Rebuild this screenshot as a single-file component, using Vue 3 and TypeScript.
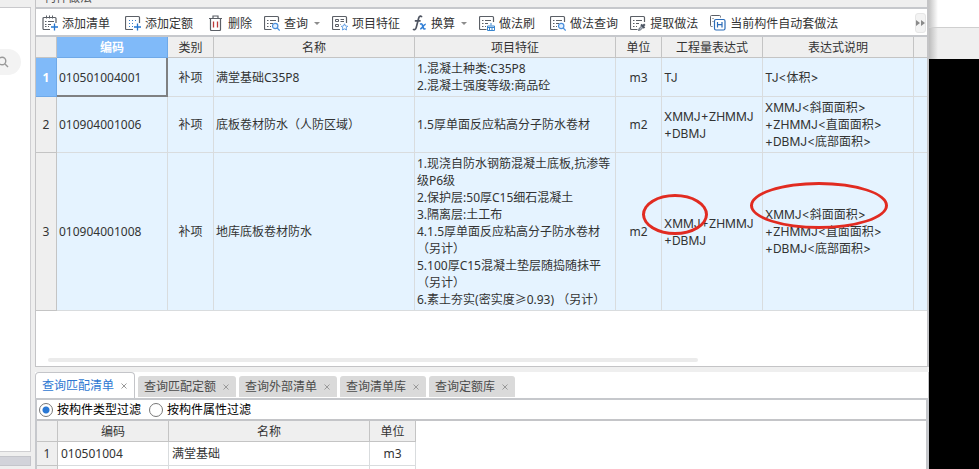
<script setup lang="ts">
import { ref } from 'vue'

interface Tool {
  icon: string
  label: string
  menu?: boolean
  wide?: boolean
}
interface Item {
  code: string
  kind: string
  name: string
  feature: string
  unit: string
  expr: string
  desc: string
  marked?: boolean
}

const tools: Tool[] = [
  { icon: 'addList', label: '添加清单', wide: true },
  { icon: 'addQuota', label: '添加定额', wide: true },
  { icon: 'trash', label: '删除' },
  { icon: 'query', label: '查询', menu: true },
  { icon: 'feature', label: '项目特征' },
  { icon: 'fx', label: '换算', menu: true },
  { icon: 'brush', label: '做法刷', wide: true },
  { icon: 'query', label: '做法查询' },
  { icon: 'pick', label: '提取做法' },
  { icon: 'auto', label: '当前构件自动套做法' },
]

const items: Item[] = [
  {
    code: '010501004001',
    kind: '补项',
    name: '满堂基础C35P8',
    feature: '1.混凝土种类:C35P8\n2.混凝土强度等级:商品砼',
    unit: 'm3',
    expr: 'TJ',
    desc: 'TJ<体积>',
  },
  {
    code: '010904001006',
    kind: '补项',
    name: '底板卷材防水（人防区域）',
    feature: '1.5厚单面反应粘高分子防水卷材',
    unit: 'm2',
    expr: 'XMMJ+ZHMMJ\n+DBMJ',
    desc: 'XMMJ<斜面面积>\n+ZHMMJ<直面面积>\n+DBMJ<底部面积>',
  },
  {
    code: '010904001008',
    kind: '补项',
    name: '地库底板卷材防水',
    feature:
      '1.现浇自防水钢筋混凝土底板,抗渗等\n级P6级\n2.保护层:50厚C15细石混凝土\n3.隔离层:土工布\n4.1.5厚单面反应粘高分子防水卷材\n（另计）\n5.100厚C15混凝土垫层随捣随抹平\n（另计）\n6.素土夯实(密实度≥0.93) （另计）',
    unit: 'm2',
    expr: 'XMMJ+ZHMMJ\n+DBMJ',
    desc: 'XMMJ<斜面面积>\n+ZHMMJ<直面面积>\n+DBMJ<底部面积>',
    marked: true,
  },
]

const tabs = ['查询匹配清单', '查询匹配定额', '查询外部清单', '查询清单库', '查询定额库']
const activeTab = ref(0)
const selected = ref(0)
const filter = ref('type')
</script>

<template>
  <div class="app">
    <aside class="side">
      <div class="side-head"></div>
      <div class="side-body">
        <button class="search" aria-label="搜索">
          <svg width="12" height="12" viewBox="0 0 12 12" fill="none" stroke="#999" stroke-width="1.4">
            <circle cx="5" cy="5" r="3.8" />
            <path d="M8 8l3 3" />
          </svg>
        </button>
      </div>
      <div class="side-bar"></div>
    </aside>

    <main class="main">
      <section class="upper">
        <header class="title">构件做法</header>
        <div class="toolbar">
          <button v-for="t in tools" :key="t.label" class="tool" :class="{ wide: t.wide }">
            <svg v-if="t.icon === 'fx'" width="15" height="16" viewBox="0 0 15 16" fill="none">
              <path d="M9.8 2.2C9.3 .6 7.400 .8 6.700 3L4.200 12.600C3.700 14.500 2.200 15.300 1 14.200M2.800 5.800H8.600" stroke="#4d5360" stroke-width="1.700" />
              <path d="M8 9.300C9.600 8 10.300 9.300 10.900 11.500S12 14.800 13.600 13.500M13.800 9.200C11.600 9 10.600 13.600 8.200 14" stroke="#3380d6" stroke-width="1.600" />
            </svg>
            <svg v-else width="16" height="16" viewBox="0 0 16 16" fill="none" stroke="#5b5f66">
              <template v-if="t.icon === 'addList'">
                <path d="M8 14.500H2a1 1 0 0 1-1-1V3.500a1 1 0 0 1 1-1h11a1 1 0 0 1 1 1V8" stroke-width="1.200" />
                <path d="M4.500 .5v3M7.500 .5v3M10.500 .5v3" />
                <path d="M3 6.500h1.500M6 6.500h6M3 9.500h1.500M6 9.500h3M3 11.500h1.500M6 11.500h1" />
                <path d="M12.500 8.500v7M9 12h7" stroke="#2475cf" stroke-width="1.300" />
              </template>
              <template v-else-if="t.icon === 'addQuota'">
                <path d="M8 14.500H1.500a1 1 0 0 1-1-1v-11a1 1 0 0 1 1-1h12a1 1 0 0 1 1 1V8" stroke-width="1.200" />
                <path d="M4 5.500h9M4 8.500h6M4 11.500h4" stroke="#3b7fc9" stroke-dasharray="1 2" />
                <path d="M12.500 8.500v7M9 12h7" stroke="#2475cf" stroke-width="1.300" />
              </template>
              <template v-else-if="t.icon === 'trash'">
                <path d="M1 3.500h13M5 3V1h5v2M2.500 4v10.500a1 1 0 0 0 1 1h8a1 1 0 0 0 1-1V4" stroke-width="1.200" />
                <path d="M5.500 6.500v6M9.500 6.500v6" stroke="#bd3a3a" stroke-width="1.300" />
              </template>
              <template v-else-if="t.icon === 'auto'">
                <path d="M2.500 11.500H1.500a1 1 0 0 1-1-1V1.500a1 1 0 0 1 1-1h8a1 1 0 0 1 1 1v1M2.500 3.500h1M2.500 6.500h1" />
                <rect x="4.500" y="4.500" width="10.500" height="10.500" rx="1.500" stroke="#2b6cb8" stroke-width="1.200" />
                <path d="M7.500 7v5.500M12 7v5.500M7.500 9.700H12" stroke="#2b6cb8" stroke-width="1.200" />
              </template>
              <template v-else-if="t.icon === 'feature'">
                <path d="M8 14.500H1.500a1 1 0 0 1-1-1v-11a1 1 0 0 1 1-1h12a1 1 0 0 1 1 1V8" stroke-width="1.200" />
                <path d="M3.500 4.500h3v2h-3zM3.500 9.500h3v2h-3zM8.500 4.500H12M8.500 6.500H12M8.500 9.500H9" />
                <path d="M12.500 8.800l1 2.200 2.200.3-1.600 1.500.4 2.200-2-1.100-2 1.100.4-2.200-1.600-1.500 2.200-.3z" stroke="#4f93e0" stroke-width=".9" />
              </template>
              <template v-else>
                <path d="M7.500 14.500H1.500a1 1 0 0 1-1-1v-11a1 1 0 0 1 1-1h12a1 1 0 0 1 1 1V7" stroke-width="1.200" />
                <path d="M3 5.500h1.500M6 5.500h6M3 8.500h1.500M6 8.500h3M3 11.500h1.500M6 11.500h1" />
                <g v-if="t.icon === 'query'" stroke="#4a90dd" stroke-width="1.200">
                  <circle cx="11.200" cy="11" r="2.700" fill="#e3f0ff" />
                  <path d="M13.200 13l2.500 2.500" />
                </g>
                <g v-else-if="t.icon === 'brush'" stroke="#3a86cf">
                  <path d="M12 8v2.500M8.500 11h7v4.500h-7zM8.500 12.500h7M10.500 13v2.500M13 13v2.500" />
                </g>
                <g v-else stroke="#4c5563">
                  <path d="M8.500 15.500l.7-2.200 2.800-2.800 1.500 1.500-2.800 2.800z" fill="#aab2bd" stroke-width=".8" />
                  <path d="M11 9.500l3.500 3.500M12.500 11.500l2.300-2.300" stroke-width="2" />
                </g>
              </template>
            </svg>
            <span>{{ t.label }}</span>
            <i v-if="t.menu" class="caret"></i>
          </button>
          <button class="more" aria-label="更多">
            <svg width="9" height="6" viewBox="0 0 9 6" fill="#8a8a8a"><path d="M0 0l4 3-4 3zM5 0l4 3-4 3z" /></svg>
          </button>
        </div>

        <table class="grid top">
          <colgroup>
            <col class="c-num" /><col class="c-code" /><col class="c-small" /><col class="c-name" />
            <col class="c-name" /><col class="c-small" /><col class="c-expr" /><col class="c-desc" /><col />
          </colgroup>
          <thead>
            <tr>
              <th></th>
              <th class="on">编码</th>
              <th>类别</th>
              <th>名称</th>
              <th>项目特征</th>
              <th>单位</th>
              <th>工程量表达式</th>
              <th>表达式说明</th>
              <th></th>
            </tr>
          </thead>
          <tbody>
            <tr v-for="(r, i) in items" :key="r.code" @click="selected = i">
              <th scope="row" :class="{ on: i === selected }">{{ i + 1 }}</th>
              <td :class="{ cursor: i === selected }">{{ r.code }}</td>
              <td class="mid">{{ r.kind }}</td>
              <td>{{ r.name }}</td>
              <td>{{ r.feature }}</td>
              <td class="mid">{{ r.unit }}</td>
              <td class="formula">{{ r.expr }}<span v-if="r.marked" class="ring ring-expr"></span></td>
              <td class="formula">{{ r.desc }}<span v-if="r.marked" class="ring ring-desc"></span></td>
              <td></td>
            </tr>
          </tbody>
        </table>
        <div class="scroll"><div class="thumb"></div></div>
      </section>

      <nav class="tabs">
        <div v-for="(t, i) in tabs" :key="t" class="tab" :class="{ active: i === activeTab }">
          <button class="tab-name" @click="activeTab = i">{{ t }}</button>
          <button class="close" :aria-label="'关闭' + t">
            <svg width="6" height="6" viewBox="0 0 6 6" stroke="#999"><path d="M.5 .5l5 5M5.500 .5l-5 5" /></svg>
          </button>
        </div>
      </nav>

      <section class="lower">
        <div class="filters">
          <label><input v-model="filter" type="radio" name="filter" value="type" />按构件类型过滤</label>
          <label><input v-model="filter" type="radio" name="filter" value="attr" />按构件属性过滤</label>
        </div>
        <table class="grid bottom">
          <colgroup>
            <col class="c-num" /><col class="c-code" /><col class="c-name" /><col class="c-small" />
          </colgroup>
          <thead>
            <tr><th></th><th>编码</th><th>名称</th><th>单位</th></tr>
          </thead>
          <tbody>
            <tr><th scope="row">1</th><td>010501004</td><td>满堂基础</td><td class="mid">m3</td></tr>
            <tr><th></th><td></td><td></td><td></td></tr>
          </tbody>
        </table>
      </section>
    </main>

    <aside class="outside"><div class="outside-head"></div><div class="outside-body"></div></aside>
  </div>
</template>

<style>
body {
  margin: 0;
  background: #000;
}
</style>

<style scoped>
.app {
  display: grid;
  grid-template-columns: 31px minmax(0, 1fr) 50px;
  column-gap: 0;
  height: 100vh;
  overflow: hidden;
  background: #efefef;
  color: #333;
  font: 12px/17px "Noto Sans", "Noto Sans CJK SC", sans-serif;
}
.app * {
  box-sizing: border-box;
}
button {
  margin: 0;
  padding: 0;
  border: 0;
  background: none;
  color: inherit;
  font: inherit;
}
svg {
  display: block;
  flex: none;
}

/* left strip */
.side {
  display: flex;
  flex-direction: column;
  min-height: 0;
}
.side-head {
  height: 8px;
  border-bottom: 1px solid #c9c9cc;
}
.side-body {
  flex: 1;
  padding-top: 41px;
  background: #fff;
  border: solid #cfcfd2;
  border-width: 0 1px 1px 0;
}
.search {
  display: flex;
  align-items: center;
  width: 21px;
  height: 26px;
  border-radius: 0 13px 13px 0;
  background: #f3f3f3;
}
.search svg {
  margin-left: -3px;
}
.side-bar {
  height: 10px;
  margin: 4px 0 3px;
  background: #d2d3da;
  border: solid #c4c5cb;
  border-width: 1px 1px 1px 0;
}

/* main window */
.main {
  display: flex;
  flex-direction: column;
  min-width: 0;
  min-height: 0;
  padding-left: 4px;
}
.upper {
  border: solid #c4c4c6;
  border-width: 0 2px 1px 1px;
  background: #fff;
}
.title {
  display: flex;
  align-items: flex-end;
  height: 9px;
  padding: 0 8px 1px;
  overflow: hidden;
  background: #efefef;
  border-bottom: 2px solid #c6c8cc;
  color: #555;
}
.toolbar {
  display: flex;
  align-items: center;
  gap: 12px;
  height: 28px;
  padding: 2px 0 0 6px;
  border-bottom: 2px solid #c6c8cc;
}
.tool {
  display: flex;
  align-items: center;
  gap: 4px;
  flex: none;
  white-space: nowrap;
}
.wide {
  margin-right: 3px;
}
.caret {
  margin-left: 2px;
  border: solid transparent;
  border-width: 3px 3px 0;
  border-top-color: #8c8c8c;
}
.more {
  display: flex;
  align-items: center;
  justify-content: center;
  width: 11px;
  height: 20px;
  margin-left: auto;
  margin-right: 1px;
  border: 1px solid #e6e6e6;
  border-radius: 3px;
  background: #f3f3f3;
}

/* data grids */
.grid {
  table-layout: fixed;
  border-collapse: separate;
  border-spacing: 0;
}
.c-num {
  width: 21px;
}
.c-code {
  width: 111px;
}
.c-small {
  width: 46px;
}
.c-name {
  width: 201px;
}
.c-expr {
  width: 101px;
}
.c-desc {
  width: 151px;
}
.top {
  width: 100%;
}
.bottom {
  width: 379px;
}
.grid th {
  padding: 1px 0;
  background: #efefef;
  border: solid #c4c4c4;
  border-width: 0 1px 1px 0;
  font-weight: 400;
  text-align: center;
}
.grid thead th {
  height: 21px;
}
.grid td {
  position: relative;
  padding: 2px 0 2px 2px;
  border: solid #d9dcde;
  border-width: 0 1px 1px 0;
  white-space: pre;
}
.top td {
  background: #e5f3ff;
}
.top th:last-child,
.top td:last-child {
  border-right: 0;
}
.grid td.mid {
  padding-left: 0;
  text-align: center;
}
.grid td.formula {
  font-family: Inter, "Noto Sans CJK SC", sans-serif;
}
.top th.on {
  background: #80baf9;
  border-color: #6fa9e8;
  color: #fff;
  font-weight: 700;
}
.top td.cursor {
  padding-bottom: 1px;
  border-color: #7f8082;
  border-width: 0 2px 2px 0;
}
.bottom td {
  height: 24px;
  padding-left: 3px;
}
.ring {
  position: absolute;
  z-index: 1;
  border: 3px solid #e12b21;
  border-radius: 50%;
  pointer-events: none;
}
.ring-expr {
  left: -20px;
  top: 41px;
  width: 66px;
  height: 41px;
}
.ring-desc {
  left: -13px;
  top: 29px;
  width: 138px;
  height: 47px;
}
.scroll {
  padding: 47px 0 4px 12px;
}
.thumb {
  width: 74%;
  height: 4px;
  border-radius: 2px;
  background: #ebebeb;
}

/* tabs */
.tabs {
  display: flex;
  align-items: flex-end;
  gap: 3px;
  margin-top: 5px;
  background: #fff;
  border-right: 1px solid #c4c4c6;
}
.tab {
  display: flex;
  align-items: center;
  gap: 7px;
  height: 21px;
  margin-bottom: 1px;
  padding: 0 7px 0 6px;
  border-radius: 3px 3px 0 0;
  background: #dadada;
  color: #4c4c4c;
}
.tab.active {
  height: 26px;
  margin-bottom: 0;
  border: 1px solid #c4c5c9;
  border-bottom: 0;
  border-radius: 4px 4px 0 0;
  background: #fff;
  color: #2f78d2;
}
.close {
  width: 6px;
  height: 6px;
  margin-top: 1px;
}

/* lower pane */
.lower {
  flex: 1;
  min-height: 0;
  overflow: hidden;
  border: solid #c6c8cc;
  border-width: 2px 3px 0 2px;
  background: #fff;
}
.filters {
  display: flex;
  align-items: center;
  gap: 8px;
  height: 21px;
  padding-left: 2px;
  border-bottom: 2px solid #c4c5c8;
  color: #000;
}
.filters label {
  display: flex;
  align-items: center;
  gap: 4px;
}
.filters input {
  appearance: none;
  width: 14px;
  height: 14px;
  margin: 0;
  border: 1px solid #777;
  border-radius: 50%;
  background: #fff;
}
.filters input:checked {
  background: radial-gradient(circle, #2a78d4 0 3px, #fff 4px);
}

/* area outside the window */
.outside {
  display: flex;
  flex-direction: column;
  background: #000;
}
.outside-head {
  height: 28px;
  background: linear-gradient(90deg, #c4c4c4, #fff 9px);
  border-bottom: 1px solid #cfcfcf;
}
.outside-body {
  height: 31px;
  background: linear-gradient(90deg, #bdbdbd, #efefef 9px);
}
</style>
